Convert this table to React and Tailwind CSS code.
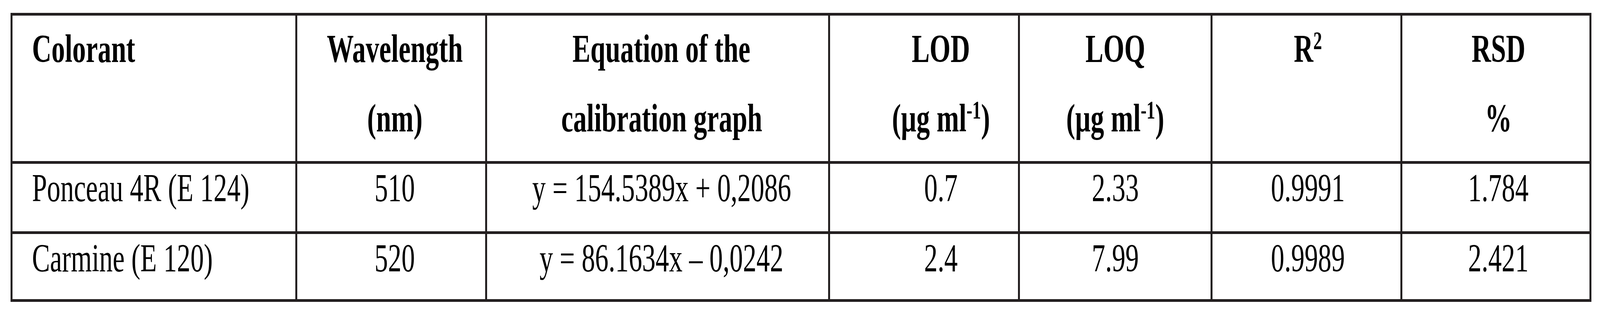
import { useState } from 'react';

// Reference is laid out on a 6067px-wide sheet; everything horizontal is
// expressed as a share of the viewport so the table keeps its proportions.
const REF_W = 6067;

const columns = [
  { key: 'colorant', head: ['Colorant'], left: true },
  { key: 'wl', head: ['Wavelength', '(nm)'], pad: 'pl-[0.46vw]' },
  { key: 'eq', head: ['Equation of the', 'calibration graph'], pad: 'pl-[0.5vw]' },
  { key: 'lod', head: ['LOD', 'unit'], pad: 'pl-[2.1vw]' },
  { key: 'loq', head: ['LOQ', 'unit'], pad: 'pl-0' },
  { key: 'r2', head: ['R2'], pad: 'pl-[0.2vw]' },
  { key: 'rsd', head: ['RSD', '%'], pad: 'pl-[0.33vw]' },
];

const rows = [
  ['Ponceau 4R (E 124)', '510', 'y = 154.5389x + 0,2086', '0.7', '2.33', '0.9991', '1.784'],
  ['Carmine (E 120)', '520', 'y = 86.1634x \u2013 0,0242', '2.4', '7.99', '0.9989', '2.421'],
];

const cellBorder = 'border-r-[5px] border-b-[7px] border-[#231f20]';

function Label({ text }) {
  if (text === 'unit') {
    return (
      <>
        (µg ml<sup className="text-[65%]">-1</sup>)
      </>
    );
  }
  if (text === 'R2') {
    return (
      <>
        R<sup className="text-[65%]">2</sup>
      </>
    );
  }
  return text;
}

function Line({ left, sx, children }) {
  return (
    <span
      className={`block whitespace-nowrap ${left ? 'origin-left' : 'origin-center'}`}
      style={{ transform: `scaleX(${sx})` }}
    >
      {children}
    </span>
  );
}

export default function App() {
  const [sx] = useState(() => Math.min(1, window.innerWidth / REF_W));

  return (
    <div className="w-full h-[800px] bg-white overflow-hidden text-black font-['Liberation_Serif','Times_New_Roman',serif] text-[102px]">
      <div className="ml-[0.659vw] mt-[33px] w-[98.8vw] grid grid-cols-[minmax(0,729fr)_minmax(0,486fr)_minmax(0,878fr)_minmax(0,486fr)_minmax(0,493fr)_minmax(0,486fr)_minmax(0,484fr)] grid-rows-[380px_180px_174px] border-l-[5px] border-t-[7px] border-[#231f20]">
        {columns.map((c) => (
          <div
            key={c.key}
            className={`${cellBorder} font-bold leading-[178px] flex flex-col -mt-0 ${
              c.left ? 'items-start pl-[1.22vw]' : `items-center ${c.pad}`
            }`}
          >
            <div className={`-mt-1 flex flex-col ${c.left ? 'items-start' : 'items-center'}`}>
              {c.head.map((h) => (
                <Line key={h} left={c.left} sx={sx}>
                  <Label text={h} />
                </Line>
              ))}
            </div>
          </div>
        ))}
        {rows.map((r, ri) =>
          r.map((v, ci) => (
            <div
              key={ri + '-' + ci}
              className={`${cellBorder} leading-[123px] flex ${
                ci === 0 ? 'justify-start pl-[1.22vw]' : `justify-center ${columns[ci].pad}`
              }`}
            >
              <Line left={ci === 0} sx={sx}>
                {v}
              </Line>
            </div>
          ))
        )}
      </div>
    </div>
  );
}
